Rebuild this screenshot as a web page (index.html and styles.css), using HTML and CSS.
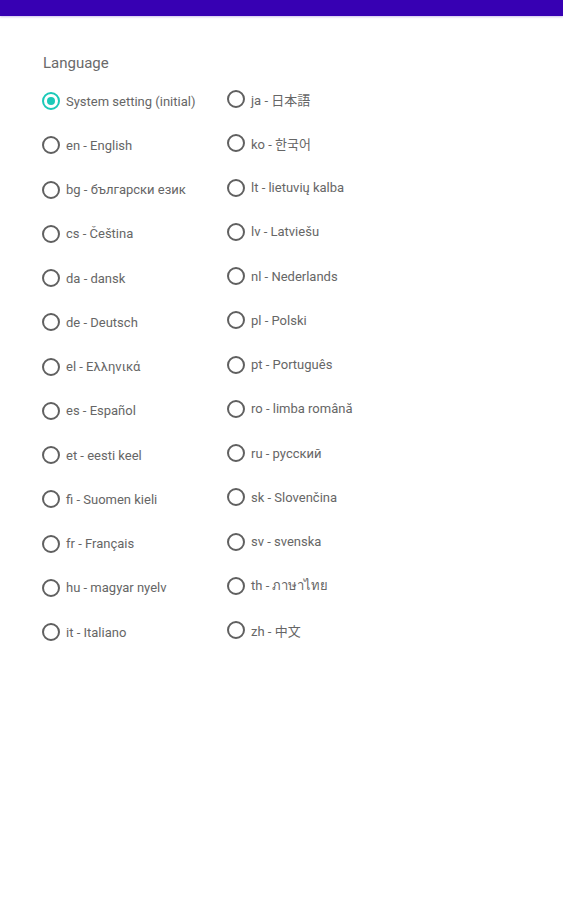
FILE: index.html
```html
<!DOCTYPE html>
<html lang="en">
<head>
<meta charset="utf-8">
<title>Language</title>
<link rel="stylesheet" href="styles.css">
</head>
<body>
<div class="appbar"></div>
<main class="content">
  <div class="label">Language</div>
  <div class="columns">
    <div class="col col-left">
      <div class="row"><span class="radio checked"></span><span class="text">System setting (initial)</span></div>
      <div class="row"><span class="radio"></span><span class="text">en - English</span></div>
      <div class="row"><span class="radio"></span><span class="text">bg - български език</span></div>
      <div class="row"><span class="radio"></span><span class="text">cs - Čeština</span></div>
      <div class="row"><span class="radio"></span><span class="text">da - dansk</span></div>
      <div class="row"><span class="radio"></span><span class="text">de - Deutsch</span></div>
      <div class="row"><span class="radio"></span><span class="text">el - Ελληνικά</span></div>
      <div class="row"><span class="radio"></span><span class="text">es - Español</span></div>
      <div class="row"><span class="radio"></span><span class="text">et - eesti keel</span></div>
      <div class="row"><span class="radio"></span><span class="text">fi - Suomen kieli</span></div>
      <div class="row"><span class="radio"></span><span class="text">fr - Français</span></div>
      <div class="row"><span class="radio"></span><span class="text">hu - magyar nyelv</span></div>
      <div class="row"><span class="radio"></span><span class="text">it - Italiano</span></div>
    </div>
    <div class="col col-right">
      <div class="row"><span class="radio"></span><span class="text">ja - 日本語</span></div>
      <div class="row"><span class="radio"></span><span class="text">ko - 한국어</span></div>
      <div class="row"><span class="radio"></span><span class="text">lt - lietuvių kalba</span></div>
      <div class="row"><span class="radio"></span><span class="text">lv - Latviešu</span></div>
      <div class="row"><span class="radio"></span><span class="text">nl - Nederlands</span></div>
      <div class="row"><span class="radio"></span><span class="text">pl - Polski</span></div>
      <div class="row"><span class="radio"></span><span class="text">pt - Português</span></div>
      <div class="row"><span class="radio"></span><span class="text">ro - limba română</span></div>
      <div class="row"><span class="radio"></span><span class="text">ru - русский</span></div>
      <div class="row"><span class="radio"></span><span class="text">sk - Slovenčina</span></div>
      <div class="row"><span class="radio"></span><span class="text">sv - svenska</span></div>
      <div class="row"><span class="radio"></span><span class="text">th - ภาษาไทย</span></div>
      <div class="row"><span class="radio"></span><span class="text">zh - 中文</span></div>
    </div>
  </div>
</main>
</body>
</html>
```
FILE: styles.css
```css
html, body {
  margin: 0;
  padding: 0;
  background: #ffffff;
}
body {
  font-family: Roboto, "Noto Sans CJK JP", "Noto Sans", sans-serif;
  color: #666666;
}
.appbar {
  height: 16px;
  background: #3700b3;
  box-shadow: 0 1px 2px rgba(55, 0, 179, 0.25);
}
.content {
  padding: 38px 0 0 43px;
}
.label {
  font-size: 15px;
  line-height: 18px;
  color: #6a6a6a;
}
.columns {
  display: grid;
  grid-template-columns: 185px 200px;
  margin-top: 7px;
  margin-left: -1px;
}
.col-right {
  margin-top: -2px;
}
.row {
  display: flex;
  align-items: center;
  height: 44.25px;
  font-size: 13px;
}
.radio {
  box-sizing: border-box;
  width: 18px;
  height: 18px;
  border: 2px solid #606060;
  border-radius: 50%;
  display: flex;
  align-items: center;
  justify-content: center;
  flex: none;
}
.radio.checked {
  border-color: #1bc9b8;
}
.radio.checked::after {
  content: "";
  width: 8px;
  height: 8px;
  border-radius: 50%;
  background: #1bc9b8;
}
.text {
  margin-left: 6px;
  white-space: nowrap;
}
```
